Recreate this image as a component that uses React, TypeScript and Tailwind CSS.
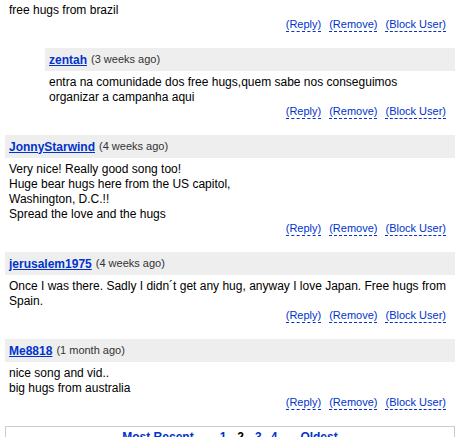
import React from 'react';

type Comment = {
  user: string;
  when: string;
  lines: string[];
  reply?: boolean;
};

const comments: Comment[] = [
  {
    user: 'zentah',
    when: '3 weeks ago',
    lines: ['entra na comunidade dos free hugs,quem sabe nos conseguimos', 'organizar a campanha aqui'],
    reply: true,
  },
  {
    user: 'JonnyStarwind',
    when: '4 weeks ago',
    lines: [
      'Very nice! Really good song too!',
      'Huge bear hugs here from the US capitol,',
      'Washington, D.C.!!',
      'Spread the love and the hugs',
    ],
  },
  {
    user: 'jerusalem1975',
    when: '4 weeks ago',
    lines: ['Once I was there. Sadly I didn´t get any hug, anyway I love Japan. Free hugs from', 'Spain.'],
  },
  {
    user: 'Me8818',
    when: '1 month ago',
    lines: ['nice song and vid..', 'big hugs from australia'],
  },
];

const Actions: React.FC = () => (
  <div className="flex justify-end gap-[8px] pr-[9px] text-[11px] leading-[15px] text-[#0033cc]">
    <span className="border-b border-dashed border-[#0033cc] leading-[13px]">(Reply)</span>
    <span className="border-b border-dashed border-[#0033cc] leading-[13px]">(Remove)</span>
    <span className="border-b border-dashed border-[#0033cc] leading-[13px]">(Block User)</span>
  </div>
);

const CommentBlock: React.FC<{ c: Comment }> = ({ c }) => (
  <div className={c.reply ? 'mb-[16px] ml-[40px]' : 'mb-[16px]'}>
    <div className="flex h-[23px] items-center bg-[#eeeeee] px-1">
      <span className="text-[12px] font-bold text-[#0033cc] underline">{c.user}</span>
      <span className="ml-[4px] text-[11px] text-[#333333]">({c.when})</span>
    </div>
    <div className="px-1 pt-1 text-[12px] leading-[15px] text-black">
      {c.lines.map((l, i) => (
        <div key={i}>{l}</div>
      ))}
    </div>
    <Actions />
  </div>
);

export default function App() {
  return (
    <div className="h-[437px] w-[467px] overflow-hidden bg-white font-['Liberation_Sans',Arial,sans-serif]">
      <div className="w-[455px] pl-[5px] pt-[3px]">
        <div className="mb-[16px]">
          <div className="px-1 text-[12px] leading-[15px] text-black">free hugs from brazil</div>
          <Actions />
        </div>
        {comments.map((c) => (
          <CommentBlock key={c.user} c={c} />
        ))}
        <div className="mt-[2px] flex justify-center border-l border-r border-t border-[#cccccc] pt-[3px] text-[12px] font-bold leading-[15px]">
          <span className="text-[#0033cc]">Most Recent</span>
          <span className="ml-[26px] text-[#0033cc]">1</span>
          <span className="ml-[11px] text-black">2</span>
          <span className="ml-[11px] text-[#0033cc]">3</span>
          <span className="ml-[9px] text-[#0033cc]">4</span>
          <span className="ml-[23px] text-[#0033cc]">Oldest</span>
        </div>
      </div>
    </div>
  );
}
